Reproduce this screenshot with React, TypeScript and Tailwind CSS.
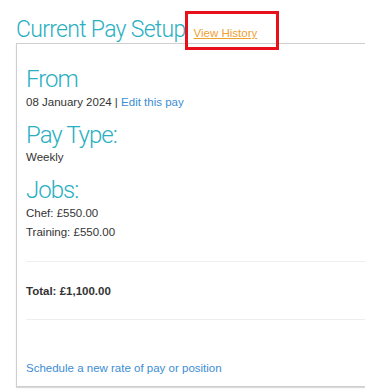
import React from "react";

export default function App() {
  const heading = "text-[24px] leading-[28px] font-light text-[#2aafc2] tracking-[-1px]";
  const roboto = { fontFamily: 'Roboto, sans-serif' };
  return (
    <div className="relative w-[365px] h-[389px] overflow-hidden bg-white" style={{ fontFamily: '"Liberation Sans", Arial, sans-serif' }}>
      <div className="flex items-baseline pl-[16px] pt-[17px]">
        <h1 className="text-[23px] leading-[26px] font-light text-[#2aafc2] tracking-[-0.7px]" style={roboto}>
          Current Pay Setup
        </h1>
        <a className="ml-[8px] text-[11.5px] text-[#f0a030] underline">View History</a>
      </div>
      <div className="ml-[16px] w-[400px] h-[344px] border border-[#cfcfcf] shadow-[0_1px_1px_rgba(0,0,0,0.15)] pl-[9px] pt-[21px] text-[11.5px] text-[#333]">
        <div className={heading} style={roboto}>From</div>
        <div className="mt-[1px] leading-[16px]">
          08 January 2024 | <a className="text-[#3c8dd4]">Edit this pay</a>
        </div>
        <div className={`${heading} mt-[11px]`} style={roboto}>Pay Type:</div>
        <div className="leading-[16px]">Weekly</div>
        <div className={`${heading} mt-[11px]`} style={roboto}>Jobs:</div>
        <div className="mt-[1px] leading-[16px]">Chef: £550.00</div>
        <div className="mt-[3px] leading-[16px]">Training: £550.00</div>
        <div className="mt-[21px] border-t border-[#eeeeee]" />
        <div className="mt-[21px] leading-[16px] font-bold">Total: £1,100.00</div>
        <div className="mt-[20px] border-t border-[#eeeeee]" />
        <div className="mt-[40px] leading-[16px] text-[#3c8dd4]">Schedule a new rate of pay or position</div>
      </div>
      <div className="absolute left-[185px] top-[11px] w-[94px] h-[39px] border-[3px] border-[#e8101a]" />
    </div>
  );
}
